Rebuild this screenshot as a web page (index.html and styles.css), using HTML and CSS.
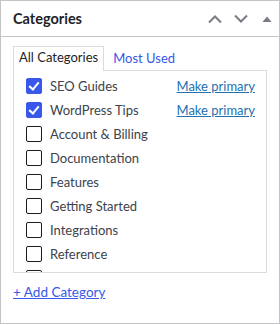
FILE: index.html
```html
<!DOCTYPE html>
<html lang="en">
<head>
  <meta charset="UTF-8">
  <title>Categories</title>
  <link rel="stylesheet" href="styles.css">
</head>
<body>
<div class="postbox">
  <div class="postbox-header">
    <h2 class="postbox-title">Categories</h2>
    <div class="handle-actions">
      <button class="handle-btn" aria-label="Move up">
        <svg width="14" height="10" viewBox="0 0 14 10"><polyline points="1,8.5 7,2.5 13,8.5" fill="none" stroke="#787c82" stroke-width="2"/></svg>
      </button>
      <button class="handle-btn" aria-label="Move down">
        <svg width="14" height="10" viewBox="0 0 14 10"><polyline points="1,1.5 7,7.5 13,1.5" fill="none" stroke="#787c82" stroke-width="2"/></svg>
      </button>
      <button class="handle-btn toggle" aria-label="Toggle panel">
        <svg width="10" height="6" viewBox="0 0 10 6"><polygon points="0.5,6 5,0.5 9.5,6" fill="#787c82"/></svg>
      </button>
    </div>
  </div>

  <div class="inside">
    <ul class="category-tabs">
      <li class="tab active">All Categories</li>
      <li class="tab"><a href="#">Most Used</a></li>
    </ul>

    <div class="tabs-panel">
      <ul class="cat-list">
        <li class="cat-row">
          <span class="checkbox checked"></span>
          <span class="cat-name">SEO Guides</span>
          <a href="#" class="make-primary">Make primary</a>
        </li>
        <li class="cat-row">
          <span class="checkbox checked"></span>
          <span class="cat-name">WordPress Tips</span>
          <a href="#" class="make-primary">Make primary</a>
        </li>
        <li class="cat-row"><span class="checkbox"></span><span class="cat-name">Account &amp; Billing</span></li>
        <li class="cat-row"><span class="checkbox"></span><span class="cat-name">Documentation</span></li>
        <li class="cat-row"><span class="checkbox"></span><span class="cat-name">Features</span></li>
        <li class="cat-row"><span class="checkbox"></span><span class="cat-name">Getting Started</span></li>
        <li class="cat-row"><span class="checkbox"></span><span class="cat-name">Integrations</span></li>
        <li class="cat-row"><span class="checkbox"></span><span class="cat-name">Reference</span></li>
        <li class="cat-row"><span class="checkbox"></span></li>
      </ul>
    </div>

    <a href="#" class="add-category">+ Add Category</a>
  </div>
</div>
</body>
</html>
```

FILE: styles.css
```css
html, body {
  margin: 0;
  background: #fff;
  font-family: Lato, 'Liberation Sans', Arial, sans-serif;
  font-size: 13px;
  color: #3c434a;
}

.postbox {
  box-sizing: border-box;
  width: 280px;
  height: 324px;
  border: 1px solid #c3c4c7;
  background: #fff;
}

.postbox-header {
  display: flex;
  align-items: center;
  height: 35px;
  border-bottom: 1px solid #c3c4c7;
}
.postbox-title {
  flex: 1;
  margin: 0;
  padding-left: 12px;
  font-size: 14.5px;
  font-weight: 700;
  color: #1d2327;
}

.handle-actions {
  display: flex;
  height: 100%;
}
.handle-btn {
  display: flex;
  align-items: center;
  justify-content: center;
  width: 26px;
  height: 100%;
  padding: 0;
  border: none;
  background: none;
  cursor: pointer;
}
.handle-btn.toggle {
  width: 25px;
}

.inside {
  padding: 9px 12px 0 12px;
}

.category-tabs {
  display: flex;
  align-items: flex-end;
  margin: 0 0 -1px 0;
  padding: 0;
  list-style: none;
}
.tab {
  padding: 3px 5px 5px;
  line-height: 15px;
  border: 1px solid transparent;
  border-bottom: none;
}
.tab.active {
  border-color: #dcdcde;
  background: #fff;
  position: relative;
  z-index: 1;
  color: #1d2327;
  padding-bottom: 6px;
}
.tab a {
  color: #3858e9;
  text-decoration: none;
  margin-left: 3px;
}

.tabs-panel {
  box-sizing: border-box;
  height: 203px;
  border: 1px solid #dcdcde;
  overflow: hidden;
}

.cat-list {
  margin: 0;
  padding: 3px 11px 0 12px;
  list-style: none;
}
.cat-row {
  display: flex;
  align-items: center;
  height: 24px;
}

.checkbox {
  box-sizing: border-box;
  width: 16px;
  height: 16px;
  margin-right: 8px;
  border: 1px solid #1e1e1e;
  border-radius: 2px;
  background: #fff;
  position: relative;
}
.checkbox.checked {
  border-color: #3858e9;
  background: #3858e9;
}
.checkbox.checked::after {
  content: "";
  position: absolute;
  left: 4px;
  top: 1px;
  width: 4px;
  height: 8px;
  border: solid #fff;
  border-width: 0 2px 2px 0;
  transform: rotate(40deg);
}

.cat-name {
  flex: 1;
}

.make-primary {
  color: #2271b1;
  text-decoration: underline;
}

.add-category {
  display: inline-block;
  margin-top: 11px;
  color: #3858e9;
  text-decoration: underline;
  font-size: 13.5px;
}
```
